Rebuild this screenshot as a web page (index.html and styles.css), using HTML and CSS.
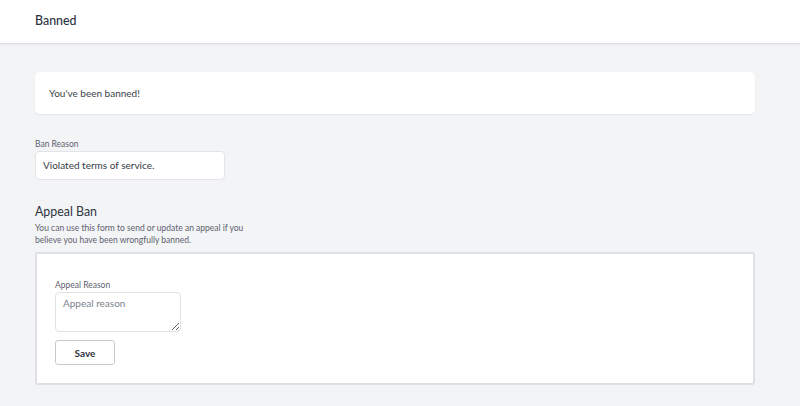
FILE: index.html
```html
<!DOCTYPE html>
<html lang="en">
<head>
<meta charset="utf-8">
<title>Banned</title>
<link rel="stylesheet" href="styles.css">
</head>
<body>
<header class="topbar">
  <h1 class="topbar-title">Banned</h1>
</header>
<main class="content">
  <div class="notice-card">You've been banned!</div>

  <div class="field">
    <label class="field-label">Ban Reason</label>
    <div class="readonly-input">Violated terms of service.</div>
  </div>

  <section class="appeal">
    <h2 class="appeal-title">Appeal Ban</h2>
    <p class="appeal-desc">You can use this form to send or update an appeal if you believe you have been wrongfully banned.</p>
    <form class="appeal-box">
      <label class="field-label" for="reason">Appeal Reason</label>
      <textarea id="reason" class="appeal-textarea" placeholder="Appeal reason"></textarea>
      <button type="button" class="save-btn">Save</button>
    </form>
  </section>
</main>
</body>
</html>
```

FILE: styles.css
```css
* { box-sizing: border-box; }
html, body {
  margin: 0;
  padding: 0;
  background: #f3f4f6;
  font-family: Lato, "Open Sans", sans-serif;
  color: #374151;
}
.topbar {
  background: #ffffff;
  height: 44px;
  border-bottom: 1px solid #dcdde1;
  box-shadow: 0 1px 2px rgba(0,0,0,0.04);
  display: flex;
  align-items: center;
  padding: 0 35px 2px;
}
.topbar-title {
  margin: 0;
  font-size: 12.4px;
  font-weight: 500;
  color: #2d3340;
}
.content {
  padding: 28px 45px 0 35px;
}
.notice-card {
  background: #ffffff;
  height: 42px;
  border-radius: 5px;
  box-shadow: 0 1px 2px rgba(0,0,0,0.06);
  display: flex;
  align-items: center;
  padding: 0 14px 1px;
  font-size: 10px;
  color: #3b3f4a;
}
.field {
  margin-top: 24px;
  display: flex;
  flex-direction: column;
}
.field-label {
  display: block;
  font-size: 8.5px;
  line-height: 12px;
  color: #5e6170;
  margin-bottom: 1px;
}
.readonly-input {
  width: 190px;
  height: 29px;
  background: #ffffff;
  border: 1px solid #e3e4e8;
  border-radius: 4px;
  padding: 0 7px 1px;
  display: flex;
  align-items: center;
  font-size: 10px;
  color: #363a45;
}
.appeal {
  margin-top: 24px;
}
.appeal-title {
  margin: 0;
  font-size: 12.4px;
  line-height: 16px;
  font-weight: 400;
  color: #2f3441;
}
.appeal-desc {
  margin: 2px 0 0;
  width: 225px;
  font-size: 8.5px;
  line-height: 12px;
  color: #5e6170;
}
.appeal-box {
  margin-top: 6px;
  background: #ffffff;
  border: 2px solid #dfe0e4;
  border-radius: 3px;
  height: 133px;
  padding: 25px 18px 0;
  display: flex;
  flex-direction: column;
  align-items: flex-start;
}
.appeal-textarea {
  display: block;
  width: 126px;
  height: 40px;
  border: 1px solid #e0e1e6;
  border-radius: 4px;
  padding: 4px 7px;
  font-family: Lato, "Open Sans", sans-serif;
  font-size: 10px;
  color: #363a45;
  resize: vertical;
}
.appeal-textarea::placeholder {
  color: #7b7f8c;
}
.save-btn {
  margin-top: 8px;
  width: 60px;
  height: 25px;
  background: #ffffff;
  border: 1px solid #c9cad0;
  border-radius: 3px;
  font-family: Lato, "Open Sans", sans-serif;
  font-size: 10px;
  font-weight: 700;
  color: #2f3441;
  cursor: pointer;
}
```
